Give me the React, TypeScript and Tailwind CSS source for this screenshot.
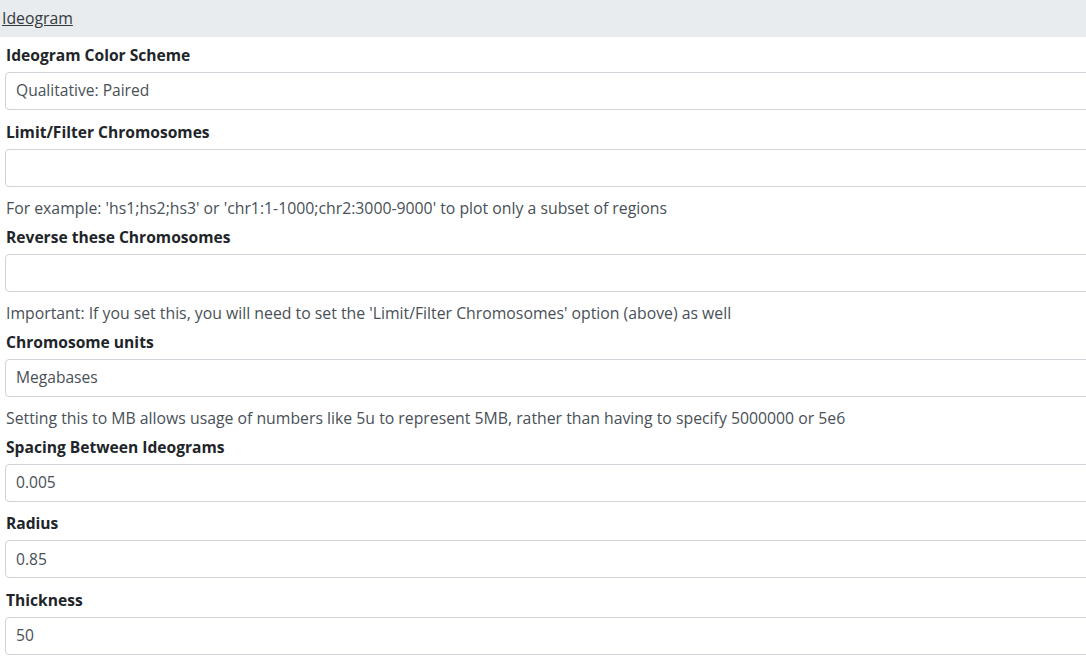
import React from "react"

type Field = {
  label: string
  value: string
  help?: string
}

const fields: Field[] = [
  { label: "Ideogram Color Scheme", value: "Qualitative: Paired" },
  {
    label: "Limit/Filter Chromosomes",
    value: "",
    help: "For example: 'hs1;hs2;hs3' or 'chr1:1-1000;chr2:3000-9000' to plot only a subset of regions",
  },
  {
    label: "Reverse these Chromosomes",
    value: "",
    help: "Important: If you set this, you will need to set the 'Limit/Filter Chromosomes' option (above) as well",
  },
  {
    label: "Chromosome units",
    value: "Megabases",
    help: "Setting this to MB allows usage of numbers like 5u to represent 5MB, rather than having to specify 5000000 or 5e6",
  },
  { label: "Spacing Between Ideograms", value: "0.005" },
  { label: "Radius", value: "0.85" },
  { label: "Thickness", value: "50" },
]

export default function App() {
  return (
    <div className="w-[1086px] h-[662px] overflow-hidden bg-white text-[#212529] font-['Open_Sans',sans-serif] text-[15.6px]">
      <div className="h-[37px] bg-[#e9ecef] flex items-center pl-[2px] pb-[1px]">
        <a href="#" className="underline text-[#343a40] leading-[22px] text-[15.8px]">
          Ideogram
        </a>
      </div>
      <div className="pl-[5px] pt-[7px]">
        {fields.map((f, i) => (
          <div key={i} className={f.help ? "mb-[7px]" : "mb-[10.7px]"}>
            <label className="block font-bold leading-[22px] pl-[1px] mb-[6px]">{f.label}</label>
            <div className="w-[1100px] h-[38px] border border-[#ced4da] rounded-[4px] flex items-center px-[10px] text-[#495057]">
              {f.value}
            </div>
            {f.help && (
              <p className="mt-[10px] leading-[22px] pl-[1px] text-[#495057] text-[15.8px]">{f.help}</p>
            )}
          </div>
        ))}
      </div>
    </div>
  )
}
